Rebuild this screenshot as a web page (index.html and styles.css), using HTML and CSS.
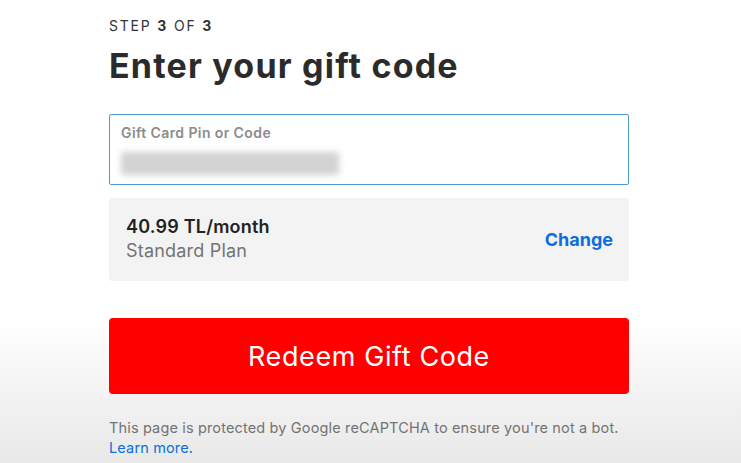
FILE: index.html
```html
<!DOCTYPE html>
<html lang="en">
<head>
<meta charset="utf-8">
<link rel="stylesheet" href="styles.css">
</head>
<body>
<main class="page">
  <div class="step">STEP <b>3</b> OF <b>3</b></div>
  <h1 class="title">Enter your gift code</h1>
  <div class="field">
    <label class="field-label">Gift Card Pin or Code</label>
    <div class="field-value"></div>
  </div>
  <div class="plan">
    <div class="plan-info">
      <div class="plan-price">40.99 TL/month</div>
      <div class="plan-name">Standard Plan</div>
    </div>
    <a class="plan-change">Change</a>
  </div>
  <button class="redeem">Redeem Gift Code</button>
  <p class="legal">This page is protected by Google reCAPTCHA to ensure you're not a bot. <a class="learn">Learn more.</a></p>
</main>
</body>
</html>
```
FILE: styles.css
```css
html, body {
  margin: 0;
  height: 100%;
}
body {
  font-family: Inter, "Noto Sans", Arial, sans-serif;
  background: linear-gradient(to bottom, #ffffff 0px, #ffffff 320px, #e8e8e8 463px);
  color: #333;
  overflow: hidden;
}
.page {
  width: 520px;
  padding: 18px 0 0 109px;
  display: flex;
  flex-direction: column;
}
.step {
  font-size: 14px;
  color: #333;
  letter-spacing: 1.8px;
  line-height: 16px;
}
.step b { font-weight: 700; }
.title {
  margin: 12px 0 0;
  font-size: 34px;
  font-weight: 700;
  line-height: 40px;
  color: #2b2b2b;
  letter-spacing: 1.2px;
}
.field {
  margin-top: 28px;
  height: 69px;
  border: 1px solid #4f9cc6;
  border-radius: 2px;
  box-sizing: content-box;
  padding: 0 11px;
  display: flex;
  flex-direction: column;
}
.field-label {
  margin-top: 10px;
  font-size: 14px;
  font-weight: 600;
  color: #8c8c8c;
  line-height: 16px;
  letter-spacing: 0.4px;
}
.field-value {
  margin-top: 11px;
  width: 218px;
  height: 23px;
  background: #d2d2d2;
  filter: blur(3px);
  border-radius: 2px;
}
.plan {
  margin-top: 13px;
  height: 83px;
  background: #f4f3f4;
  border-radius: 3px;
  display: flex;
  align-items: center;
  justify-content: space-between;
  padding: 0 16px 0 17px;
}
.plan-info { display: flex; flex-direction: column; gap: 3px; margin-top: -2px; }
.plan-price {
  font-size: 18px;
  font-weight: 600;
  color: #222;
  line-height: 21px;
  letter-spacing: 0.2px;
}
.plan-name {
  font-size: 18px;
  color: #737373;
  line-height: 21px;
  letter-spacing: 0.2px;
}
.plan-change {
  font-size: 18px;
  font-weight: 700;
  color: #0b6fdb;
  margin-top: 0;
}
.redeem {
  margin-top: 37px;
  height: 76px;
  border: none;
  border-radius: 4px;
  background: #ff0000;
  color: #fff;
  font-family: inherit;
  font-size: 27px;
  font-weight: 400;
  letter-spacing: 0.6px;
}
.legal {
  margin: 24px 0 0;
  font-size: 14.5px;
  line-height: 20px;
  color: #737373;
  letter-spacing: 0.15px;
}
.learn { color: #0b6fdb; }
```
